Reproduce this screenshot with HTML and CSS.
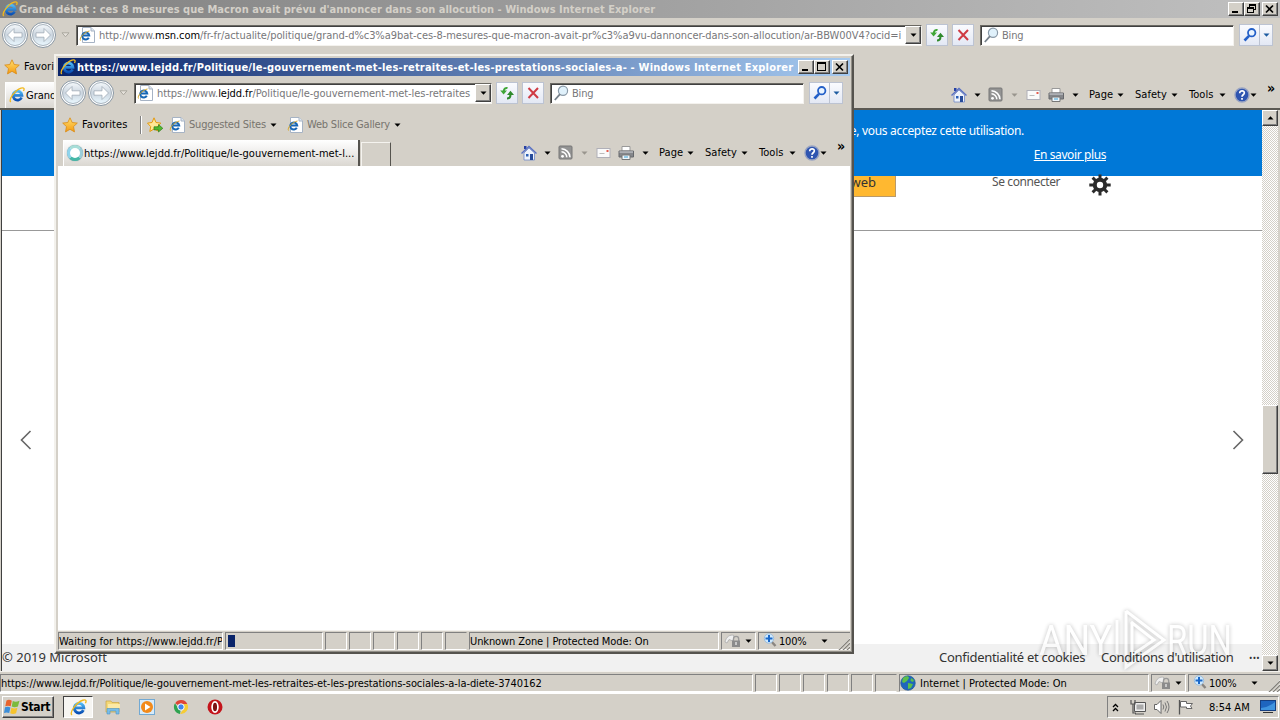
FILE: index.html
```html
<!DOCTYPE html>
<html lang="en">
<head>
  <meta charset="UTF-8">
  <title>Windows Internet Explorer</title>
  <link rel="stylesheet" href="styles.css">
</head>
<body>
  <!-- Shared icons -->
  <svg class="sprites" width="0" height="0">
    <defs>
      <linearGradient id="orb" x1="0" y1="0" x2="0" y2="1">
        <stop offset="0" stop-color="#f4f8fb"/>
        <stop offset=".5" stop-color="#cbd5df"/>
        <stop offset="1" stop-color="#eaf8ff"/>
      </linearGradient>
      <linearGradient id="gold" x1="0" y1="0" x2="0" y2="1">
        <stop offset="0" stop-color="#ffe070"/>
        <stop offset="1" stop-color="#f59a10"/>
      </linearGradient>
      <linearGradient id="blue" x1="0" y1="0" x2="0" y2="1">
        <stop offset="0" stop-color="#4fb9f5"/>
        <stop offset="1" stop-color="#0a50b5"/>
      </linearGradient>
    </defs>
    <symbol id="ie" viewBox="0 0 16 16">
      <path d="M12.6 10.5A4.5 4.5 0 1 1 13 8.3H5" fill="none" stroke="url(#blue)" stroke-width="2.7"/>
      <path d="M1.8 15C-.8 12.6 6 3.200 12 1.200C15 .2 15.800 1.500 14.500 4" fill="none" stroke="#f2b91d" stroke-width="1.300"/>
    </symbol>
    <symbol id="page-ie" viewBox="0 0 16 16">
      <path d="M3.500.5H12L15.500 4V15.500H3.500Z" fill="#fff" stroke="#a6b3c4"/>
      <path d="M12 .5V4H15.500" fill="#dde6f0" stroke="#a6b3c4"/>
      <path d="M9.800 10.800A3.500 3.500 0 1 1 10.200 8.500H4" fill="none" stroke="#1767b5" stroke-width="2"/>
      <path d="M1.500 13.500C0 11 5 5 10.500 4" fill="none" stroke="#d9a92a"/>
    </symbol>
    <symbol id="back" viewBox="0 0 28 28">
      <circle cx="14" cy="14" r="12.500" fill="#fff" stroke="#8795a2"/>
      <circle cx="14" cy="14" r="10.500" fill="url(#orb)" stroke="#a9b4be"/>
      <path d="M6.500 14L13 7.500V11.800H21V16.200H13V20.500Z" fill="#fff" stroke="#9fabb6" stroke-width=".8"/>
    </symbol>
    <symbol id="star" viewBox="0 0 16 16">
      <path d="M8 .8L10.200 5.500L15.300 6.100L11.500 9.600L12.500 14.900L8 12.300L3.500 14.900L4.500 9.600L.7 6.100L5.800 5.500Z" fill="url(#gold)" stroke="#d98a14" stroke-width=".8"/>
    </symbol>
    <symbol id="star-add" viewBox="0 0 16 16">
      <path d="M7 .8L9 5.500L13.800 6.100L10.500 9.600L11 13.900L7 12L2.800 14.500L3.700 9.600L.5 6.100L5 5.500Z" fill="#ffe795" stroke="#e39a12"/>
      <path d="M7 9.800H11.500V7.500L15.800 11.300L11.500 15V12.800H7Z" fill="#52b92f" stroke="#2b7d18" stroke-width=".7"/>
    </symbol>
    <symbol id="refresh" viewBox="0 0 16 16">
      <path d="M8.500 3C6.500 2.500 5 4 4.800 6" fill="none" stroke="#3fa637" stroke-width="2"/>
      <path d="M1.200 5.500H8L4.600 9.500Z" fill="#3fa637"/>
      <path d="M8 13.500C10.500 13.500 11.500 12 11.500 9.500" fill="none" stroke="#2f8a2c" stroke-width="2"/>
      <path d="M8 10H15L11.500 5.800Z" fill="#2f8a2c"/>
    </symbol>
    <symbol id="stop" viewBox="0 0 16 16">
      <path d="M3.500 3L13 13M13 3L3.500 13" stroke="#cf3b44" stroke-width="2"/>
    </symbol>
    <symbol id="glass" viewBox="0 0 16 16">
      <circle cx="10" cy="5.800" r="4.600" fill="#e0f1fb" stroke="#8a9aa8" stroke-width="1.200"/>
      <path d="M7 9.200L1.800 15" stroke="#76818b" stroke-width="1.800"/>
    </symbol>
    <symbol id="find" viewBox="0 0 16 16">
      <circle cx="9.700" cy="5.700" r="3.700" fill="#e9f4ff" stroke="#2460c8" stroke-width="1.800"/>
      <path d="M7 8.800L2.500 13.500" stroke="#2460c8" stroke-width="2.600"/>
    </symbol>
    <symbol id="home" viewBox="0 0 16 16">
      <path d="M3 1H5.500V4H3Z" fill="#2540a5"/>
      <path d="M3 8L8 3L13.500 8V15H3Z" fill="#eef3fc" stroke="#7088c8" stroke-width=".8"/>
      <path d="M.5 8.500L8 1.500L15.500 8.500" fill="none" stroke="#5870c4" stroke-width="1.400"/>
      <path d="M5 9H7.500V11.500H5Z" fill="#2b5fb5"/>
      <path d="M9 9H12V15H9Z" fill="#274b9a"/>
    </symbol>
    <symbol id="rss" viewBox="0 0 16 16">
      <rect x="1" y="1" width="13" height="13" rx="1" fill="#939393" stroke="#777"/>
      <circle cx="4.500" cy="11.300" r="1.400" fill="#fff"/>
      <path d="M3.500 6.800A5.500 5.500 0 0 1 8.800 12.300M3.500 3.700A9 9 0 0 1 12 12.300" fill="none" stroke="#fff" stroke-width="1.500"/>
    </symbol>
    <symbol id="mail" viewBox="0 0 16 16">
      <rect x="1" y="3.500" width="13" height="9" fill="#fafafa" stroke="#b0b0b8"/>
      <path d="M10.500 5H12.500V7H10.500Z" fill="#e55a4c"/>
      <path d="M3.500 8.500H8.500" stroke="#bbb"/>
    </symbol>
    <symbol id="printer" viewBox="0 0 16 16">
      <path d="M4 1.500H12V6H4Z" fill="#fff" stroke="#999"/>
      <path d="M1 6H15.500V12H1Z" fill="#85878b" stroke="#66686c"/>
      <path d="M1.500 7H15" stroke="#d5d7dc"/>
      <path d="M4 10H12V14.500H4Z" fill="#eef6fb" stroke="#777"/>
      <path d="M6 12H10" stroke="#3aa0d5"/>
    </symbol>
    <symbol id="help" viewBox="0 0 16 16">
      <circle cx="8" cy="8" r="7" fill="#2f55b0" stroke="#98a3c2" stroke-width="1.400"/>
      <path d="M5.700 6.200C5.700 3 10.500 3.300 10.300 6C10.200 7.800 8 7.800 8 9.800M8 11V12.800" fill="none" stroke="#fff" stroke-width="1.700"/>
    </symbol>
    <symbol id="lock" viewBox="0 0 18 16">
      <path d="M1 9C2 4 6 1 10 2.500L9 8L5 6.500L3 10Z" fill="#efefef" stroke="#aaa" stroke-width=".8"/>
      <path d="M9.500 8V6A2.600 2.600 0 0 1 14.700 6V8" fill="none" stroke="#999" stroke-width="1.300"/>
      <rect x="8" y="7.500" width="8" height="6.500" fill="#8b8b8b"/>
      <path d="M12 9V12" stroke="#ddd" stroke-width="1.500"/>
    </symbol>
    <symbol id="zoom" viewBox="0 0 16 16">
      <path d="M8 8L12.500 13" stroke="#8a8580" stroke-width="2.400"/>
      <circle cx="6" cy="5.500" r="4.700" fill="#cfeaff" stroke="#9cbddb"/>
      <path d="M6 2V9M2.500 5.500H9.500" stroke="#1b68c9" stroke-width="2"/>
    </symbol>
    <symbol id="down" viewBox="0 0 7 4"><path d="M.5 .5H6.500L3.500 3.800Z" fill="currentColor"/></symbol>
    <symbol id="hollow" viewBox="0 0 9 6"><path d="M1 .8H8L4.500 4.800Z" fill="#e5e2dc" stroke="#aaa79f"/></symbol>
    <symbol id="minimize" viewBox="0 0 12 10"><path d="M2 7H8V9H2Z"/></symbol>
    <symbol id="maximize" viewBox="0 0 12 10"><path d="M1 0H10V9H1ZM2 2V8H9V2Z" fill-rule="evenodd"/></symbol>
    <symbol id="restore" viewBox="0 0 12 10"><path d="M3 0H10V6H8V5H9V2H4V3H3ZM1 3H8V9H1ZM2 5V8H7V5Z" fill-rule="evenodd"/></symbol>
    <symbol id="close" viewBox="0 0 12 10"><path d="M2 1.500L9 8.500M9 1.500L2 8.500" stroke="#000" stroke-width="1.700"/></symbol>
    <symbol id="grip" viewBox="0 0 13 13">
      <path d="M1 13L13 1M5 13L13 5M9 13L13 9" stroke="#fff"/>
      <path d="M2 13L13 2M6 13L13 6M10 13L13 10" stroke="#85827b" stroke-width="1.300"/>
    </symbol>
  </svg>

  <!-- Main window -->
  <div class="window main-window">
    <div class="title-bar inactive">
      <svg class="icon"><use href="#ie"/></svg>
      <span class="title main-title">Grand débat : ces 8 mesures que Macron avait prévu d'annoncer dans son allocution - Windows Internet Explorer</span>
      <div class="controls">
        <i class="control"><svg><use href="#minimize"/></svg></i>
        <i class="control"><svg><use href="#restore"/></svg></i>
        <i class="control close"><svg><use href="#close"/></svg></i>
      </div>
    </div>
    <div class="nav-bar">
      <svg class="orb"><use href="#back"/></svg>
      <svg class="orb forward"><use href="#back"/></svg>
      <svg class="recent"><use href="#hollow"/></svg>
      <div class="address">
        <svg class="icon"><use href="#page-ie"/></svg>
        <span class="url main-url">http://www.<b>msn.com</b>/fr-fr/actualite/politique/grand-d%c3%a9bat-ces-8-mesures-que-macron-avait-pr%c3%a9vu-dannoncer-dans-son-allocution/ar-BBW00V4?ocid=i</span>
        <i class="combo"><svg class="arrow"><use href="#down"/></svg></i>
      </div>
      <i class="tool"><svg class="icon"><use href="#refresh"/></svg></i>
      <i class="tool"><svg class="icon"><use href="#stop"/></svg></i>
      <div class="search"><svg class="icon"><use href="#glass"/></svg><span>Bing</span></div>
      <div class="search-button"><svg class="icon"><use href="#find"/></svg><i><svg class="arrow"><use href="#down"/></svg></i></div>
    </div>
    <div class="favorites-bar">
      <svg class="icon"><use href="#star"/></svg>
      <span class="favorites">Favorites</span>
    </div>
    <div class="tab-row">
      <div class="tab main-tab"><svg class="icon"><use href="#ie"/></svg><span>Grand débat</span></div>
      <div class="command-bar">
        <svg class="icon"><use href="#home"/></svg><svg class="arrow"><use href="#down"/></svg>
        <svg class="icon"><use href="#rss"/></svg><svg class="arrow dim"><use href="#down"/></svg>
        <svg class="icon"><use href="#mail"/></svg>
        <svg class="icon"><use href="#printer"/></svg><svg class="arrow"><use href="#down"/></svg>
        <span>Page</span><svg class="arrow"><use href="#down"/></svg>
        <span>Safety</span><svg class="arrow"><use href="#down"/></svg>
        <span>Tools</span><svg class="arrow"><use href="#down"/></svg>
        <svg class="icon"><use href="#help"/></svg><svg class="arrow"><use href="#down"/></svg>
        <span class="more">»</span>
      </div>
    </div>
    <div class="viewport">
      <div class="site">
        <div class="cookie-banner">
          <p>En poursuivant votre navigation sur ce site, vous acceptez cette utilisation.</p>
          <a>En savoir plus</a>
        </div>
        <div class="site-header">
          <span class="web-button">web</span>
          <span class="sign-in">Se connecter</span>
          <svg class="gear" viewBox="0 0 22 22">
            <circle cx="11" cy="11" r="5.200" fill="none" stroke="#2b2b2b" stroke-width="4"/>
            <path d="M11 .5V5M11 17V21.500M.3 11H5M17 11H21.700M3.600 3.600L6.500 6.500M15.500 15.500L18.400 18.400M3.600 18.400L6.500 15.500M15.500 6.500L18.400 3.600" stroke="#2b2b2b" stroke-width="3"/>
          </svg>
        </div>
        <div class="carousel">
          <svg viewBox="0 0 12 20"><path d="M10.500 1L1.500 10L10.500 19" fill="none" stroke="#666" stroke-width="1.600"/></svg>
          <svg viewBox="0 0 12 20"><path d="M1.500 1L10.500 10L1.500 19" fill="none" stroke="#666" stroke-width="1.600"/></svg>
        </div>
        <div class="site-footer">
          <span class="copyright">© 2019 Microsoft</span>
          <span class="privacy">Confidentialité et cookies</span>
          <span class="terms">Conditions d'utilisation</span>
          <span class="dots">•••</span>
        </div>
      </div>
      <div class="scrollbar">
        <i class="scroll-button"><svg class="arrow up"><use href="#down"/></svg></i>
        <i class="thumb"></i>
        <i class="scroll-button bottom"><svg class="arrow"><use href="#down"/></svg></i>
      </div>
    </div>
    <div class="status-bar">
      <div class="panel message"><span class="main-message">https://www.lejdd.fr/Politique/le-gouvernement-met-les-retraites-et-les-prestations-sociales-a-la-diete-3740162</span></div>
      <i class="panel"></i><i class="panel"></i><i class="panel"></i><i class="panel"></i><i class="panel"></i><i class="panel last"></i>
      <div class="panel zone">
        <svg class="icon" viewBox="0 0 16 16">
          <circle cx="8" cy="8" r="7.300" fill="#1f66bd" stroke="#24568f" stroke-width=".6"/>
          <path d="M3 3C6 .5 9 1 9 3L7 6L4 8L2 7ZM8 8L13 9L11 13L8 14ZM11 3L14 5L13 7L10.500 6Z" fill="#5cc04a"/>
        </svg>
        <span class="main-zone">Internet | Protected Mode: On</span>
      </div>
      <div class="panel lock"><svg class="lock-icon"><use href="#lock"/></svg><svg class="arrow"><use href="#down"/></svg></div>
      <div class="panel zoom"><svg class="icon"><use href="#zoom"/></svg><span>100%</span><svg class="arrow"><use href="#down"/></svg><svg class="grip"><use href="#grip"/></svg></div>
    </div>
  </div>

  <!-- Popup window -->
  <div class="window popup">
    <div class="title-bar">
      <svg class="icon"><use href="#ie"/></svg>
      <span class="title popup-title">https://www.lejdd.fr/Politique/le-gouvernement-met-les-retraites-et-les-prestations-sociales-a- - Windows Internet Explorer</span>
      <div class="controls">
        <i class="control"><svg><use href="#minimize"/></svg></i>
        <i class="control"><svg><use href="#maximize"/></svg></i>
        <i class="control close"><svg><use href="#close"/></svg></i>
      </div>
    </div>
    <div class="nav-bar">
      <svg class="orb"><use href="#back"/></svg>
      <svg class="orb forward"><use href="#back"/></svg>
      <svg class="recent"><use href="#hollow"/></svg>
      <div class="address">
        <svg class="icon"><use href="#page-ie"/></svg>
        <span class="url popup-url">https://www.<b>lejdd.fr</b>/Politique/le-gouvernement-met-les-retraites</span>
        <i class="combo"><svg class="arrow"><use href="#down"/></svg></i>
      </div>
      <i class="tool"><svg class="icon"><use href="#refresh"/></svg></i>
      <i class="tool"><svg class="icon"><use href="#stop"/></svg></i>
      <div class="search"><svg class="icon"><use href="#glass"/></svg><span>Bing</span></div>
      <div class="search-button"><svg class="icon"><use href="#find"/></svg><i><svg class="arrow"><use href="#down"/></svg></i></div>
    </div>
    <div class="favorites-bar">
      <svg class="icon"><use href="#star"/></svg>
      <span class="favorites">Favorites</span>
      <i class="separator"></i>
      <svg class="icon"><use href="#star-add"/></svg>
      <div class="link suggested"><svg class="icon"><use href="#page-ie"/></svg><span>Suggested Sites</span><svg class="arrow"><use href="#down"/></svg></div>
      <div class="link gallery"><svg class="icon"><use href="#page-ie"/></svg><span>Web Slice Gallery</span><svg class="arrow"><use href="#down"/></svg></div>
    </div>
    <div class="tab-row">
      <div class="tab popup-tab"><i class="spinner"></i><span>https://www.lejdd.fr/Politique/le-gouvernement-met-l...</span></div>
      <i class="new-tab"></i>
      <div class="command-bar">
        <svg class="icon"><use href="#home"/></svg><svg class="arrow"><use href="#down"/></svg>
        <svg class="icon"><use href="#rss"/></svg><svg class="arrow dim"><use href="#down"/></svg>
        <svg class="icon"><use href="#mail"/></svg>
        <svg class="icon"><use href="#printer"/></svg><svg class="arrow"><use href="#down"/></svg>
        <span>Page</span><svg class="arrow"><use href="#down"/></svg>
        <span>Safety</span><svg class="arrow"><use href="#down"/></svg>
        <span>Tools</span><svg class="arrow"><use href="#down"/></svg>
        <svg class="icon"><use href="#help"/></svg><svg class="arrow"><use href="#down"/></svg>
        <span class="more">»</span>
      </div>
    </div>
    <div class="blank-page"></div>
    <div class="status-bar">
      <div class="panel message"><span class="popup-message">Waiting for https://www.lejdd.fr/Politique</span></div>
      <div class="panel progress"><i></i></div>
      <i class="panel"></i><i class="panel"></i><i class="panel"></i><i class="panel"></i><i class="panel"></i><i class="panel last"></i>
      <div class="panel zone"><span class="popup-zone">Unknown Zone | Protected Mode: On</span></div>
      <div class="panel lock"><svg class="lock-icon"><use href="#lock"/></svg><svg class="arrow"><use href="#down"/></svg></div>
      <div class="panel zoom"><svg class="icon"><use href="#zoom"/></svg><span>100%</span><svg class="arrow"><use href="#down"/></svg><svg class="grip"><use href="#grip"/></svg></div>
    </div>
  </div>

  <!-- Taskbar -->
  <div class="taskbar">
    <div class="start">
      <svg viewBox="0 0 16 16">
        <path d="M2.500 1.500C4.500 .5 6 .7 7.800 1.700L6.700 7.300C5 6.500 3.300 6.400 1.300 7.200Z" fill="#e8632c"/>
        <path d="M8.800 2C10.800 3 12.600 3 15.500 1.800L13.900 7.500C11.500 8.500 9.700 8.500 7.700 7.600Z" fill="#7cba3c"/>
        <path d="M1 8.300C3 7.500 4.700 7.600 6.400 8.400L5.200 14C3.500 13.200 1.800 13.200 0 14Z" fill="#3d8ed8"/>
        <path d="M7.400 8.700C9.500 9.600 11.200 9.600 13.400 8.700L12.100 14.200C10 15.200 8.200 15.200 6.200 14.300Z" fill="#f6c32c"/>
      </svg>
      <span>Start</span>
    </div>
    <div class="task-ie"><svg><use href="#ie"/></svg></div>
    <div class="pinned">
      <svg viewBox="0 0 16 16">
        <path d="M1 2H6L7 3.500H14V13H1Z" fill="#f3d878" stroke="#c9a544" stroke-width=".7"/>
        <path d="M3 5H15V9H3Z" fill="#fbe9a6"/>
        <path d="M2 15V9.500H14V15H11V12H5V15Z" fill="#78bde8" stroke="#4c94c8" stroke-width=".6"/>
      </svg>
      <svg viewBox="0 0 16 16">
        <rect x=".5" y=".5" width="15" height="15" fill="#d7ebfa" stroke="#72a9d3"/>
        <circle cx="8" cy="8" r="6" fill="#f28a1b"/>
        <path d="M6 4.500L11.500 8L6 11.500Z" fill="#fff"/>
      </svg>
      <svg viewBox="0 0 16 16">
        <path d="M8 8L2.200 4.200A7 7 0 0 1 14.300 5L8 5Z" fill="#df4536"/>
        <path d="M8 8L7 15A7 7 0 0 1 2 4.300L5.400 9.500Z" fill="#30a350"/>
        <path d="M8 8V5H14.300A7 7 0 0 1 7.200 15L10.600 9.500Z" fill="#f6cc35"/>
        <circle cx="8" cy="8" r="3.200" fill="#4086ee" stroke="#fff"/>
      </svg>
      <svg viewBox="0 0 16 16">
        <circle cx="8" cy="8" r="7.500" fill="#c4141b"/>
        <ellipse cx="8" cy="8" rx="2.900" ry="5.200" fill="#7d1114" stroke="#fff" stroke-width="1.700"/>
      </svg>
    </div>
    <div class="tray">
      <svg class="chevrons" viewBox="0 0 7 9"><path d="M1 4L3.500 1.500L6 4M1 8L3.500 5.500L6 8" fill="none" stroke="#000" stroke-width="1.300"/></svg>
      <svg viewBox="0 0 16 16"><path d="M4.500 3.500H15.500V12.500H4.500Z" fill="#eee" stroke="#555"/><path d="M6.500 5.500H13.500V10.500H6.500Z" fill="#aaa"/><path d="M5 15H14M1 1V5H5V1M3 5V14H6" fill="none" stroke="#555" stroke-width="1.200"/></svg>
      <svg viewBox="0 0 16 16"><path d="M.5 5.500H3L7 1.500V14.500L3 10.500H.5Z" fill="#fff" stroke="#666"/><path d="M9 5.500Q10.500 8 9 10.500M11 3.500Q14 8 11 12.500M13 2Q17 8 13 14" fill="none" stroke="#777"/></svg>
      <svg viewBox="0 0 16 16"><path d="M1.500 1V15.500" stroke="#555" stroke-width="1.300"/><path d="M2.500 2.500H8.500V4.500H14.500L12.500 7L14 9.500H8.500V8H2.500Z" fill="#fff" stroke="#666"/></svg>
      <span class="clock">8:54 AM</span>
      <svg class="desktop" viewBox="0 0 16 14"><rect x=".5" y=".5" width="15" height="10" fill="#1e65bf" stroke="#153e80"/><path d="M1 8Q9 7 15 2V10H1Z" fill="#3f94df"/><path d="M3 12.500H13" stroke="#333"/></svg>
    </div>
  </div>

  <!-- Watermark -->
  <svg class="watermark" viewBox="0 0 200 70">
    <text x="4" y="51" textLength="73" lengthAdjust="spacingAndGlyphs">ANY</text>
    <path d="M82 16V50M91 7V63L129 36L91 7M96 18L119 36L97 51V18" fill="none" stroke="#fff" stroke-width="3"/>
    <text x="132" y="51" textLength="65" lengthAdjust="spacingAndGlyphs">RUN</text>
  </svg>
</body>
</html>
```
FILE: styles.css
```css
* {
  margin: 0;
  padding: 0;
  box-sizing: border-box;
}

body {
  width: 1280px;
  height: 720px;
  overflow: hidden;
  background: #d4d0c8;
  font-family: "DejaVu Sans Condensed", "DejaVu Sans", sans-serif;
  font-stretch: condensed;
  font-size: 11px;
  line-height: 14px;
  letter-spacing: -0.2px;
  color: #000;
}

svg {
  display: block;
  flex: none;
}

i {
  display: block;
  flex: none;
}

span {
  white-space: nowrap;
}

.sprites {
  position: absolute;
}

.icon {
  width: 16px;
  height: 16px;
}

.arrow {
  width: 7px;
  height: 4px;
}

.arrow.dim {
  color: #99958e;
}

.arrow.up {
  transform: rotate(180deg);
}

/* Windows */
.window {
  display: flex;
  flex-direction: column;
  background: #d4d0c8;
}

.main-window {
  height: 692px;
}

.popup {
  position: absolute;
  z-index: 2;
  left: 54px;
  top: 54px;
  width: 800px;
  height: 600px;
  padding: 2px;
  border: 2px solid;
  border-color: #f3f1ec #55534e #55534e #f3f1ec;
  box-shadow: inset -1px -1px #918e87;
}

.title-bar {
  display: flex;
  align-items: center;
  flex: none;
  height: 18px;
  padding: 0 2px;
  background: linear-gradient(90deg, #0a246a, #a6caf0);
  color: #fff;
}

.title-bar.inactive {
  background: linear-gradient(90deg, #808080, #c0c0c0);
  color: #d4d0c8;
}

.title {
  margin-left: 1px;
  padding-top: 2px;
  font-weight: bold;
}

.main-title {
  letter-spacing: 0.02px;
}

.popup-title {
  letter-spacing: 0.205px;
}

.controls {
  display: flex;
  margin-left: auto;
}

.control {
  width: 16px;
  height: 14px;
  padding: 1px 1px;
  background: #d4d0c8;
  border: 1px solid;
  border-color: #fff #404040 #404040 #fff;
  box-shadow: inset -1px -1px #808080;
}

.control svg {
  width: 12px;
  height: 10px;
}

.control.close {
  margin-left: 2px;
}

/* Address row */
.nav-bar {
  display: flex;
  align-items: center;
  flex: none;
  height: 34px;
  padding: 0 7px 0 1px;
}

.orb {
  width: 28px;
  height: 28px;
}

.orb.forward {
  transform: scaleX(-1);
}

.recent {
  width: 9px;
  height: 6px;
  margin: 0 6px 0 4px;
}

.address,
.search {
  display: flex;
  align-items: center;
  height: 21px;
  background: #fff;
  border: 1px solid;
  border-color: #6b6963 #f4f2ee #f4f2ee #6b6963;
  box-shadow: inset 1px 1px #404040;
  color: #77777a;
}

.address {
  flex: 1;
  min-width: 0;
  padding-left: 2px;
}

.url {
  flex: 1;
  margin-left: 4px;
  padding-top: 2px;
  overflow: hidden;
  letter-spacing: -0.06px;
}

.url b {
  font-weight: normal;
  color: #000;
}

.combo {
  display: grid;
  place-items: center;
  width: 16px;
  height: 18px;
  background: #d4d0c8;
  border: 1px solid;
  border-color: #fff #404040 #404040 #fff;
  box-shadow: inset -1px -1px #808080;
  color: #000;
}

.tool {
  display: grid;
  place-items: center;
  width: 22px;
  height: 22px;
  margin-left: 4px;
  background: linear-gradient(#fafbfe, #e3e8f4);
  border: 1px solid #bcc3d2;
}

.search {
  width: 254px;
  margin-left: 6px;
  padding-left: 2px;
}

.search span {
  margin-left: 3px;
  padding-top: 2px;
}

.search-button {
  display: flex;
  align-items: center;
  width: 34px;
  height: 22px;
  margin-left: 5px;
  padding-left: 2px;
  background: linear-gradient(#fafbfe, #e3e8f4);
  border: 1px solid #bcc3d2;
  color: #1c5ba0;
}

.search-button i {
  display: grid;
  place-items: center;
  flex: 1;
  height: 20px;
  margin-left: 1px;
  border-left: 1px solid #bcc3d2;
}

/* Favorites row */
.favorites-bar {
  display: flex;
  align-items: center;
  flex: none;
  height: 30px;
  padding-left: 4px;
}

.favorites {
  width: 58px;
  margin-left: 4px;
  letter-spacing: 0.1px;
}

.separator {
  width: 2px;
  height: 18px;
  margin-right: 5px;
  border-left: 1px solid #808080;
  border-right: 1px solid #fff;
}

.link {
  display: flex;
  align-items: center;
  margin-left: 6px;
  color: #77746e;
}

.link span {
  margin-left: 4px;
}

.link .arrow {
  margin-left: 4px;
  color: #000;
}

.link.gallery {
  margin-left: 10px;
}

/* Tabs and command bar */
.tab-row {
  display: flex;
  flex: none;
  height: 26px;
}

.tab {
  display: flex;
  align-items: center;
  height: 26px;
  margin-left: 5px;
  padding-left: 3px;
  background: linear-gradient(#fff, #f1f0ee 40%, #dad7d1);
  border-left: 1px solid #fff;
  border-right: 2px solid #55534e;
}

.tab span {
  margin-left: 1px;
  padding-top: 2px;
  letter-spacing: 0.01px;
}

.main-tab {
  width: 300px;
}

.popup-tab {
  width: 297px;
}

.spinner {
  width: 16px;
  height: 16px;
  border: 3px solid #6cc7ba;
  border-color: #a7ded8 #9aceda #45b8a8 #8fd4ec;
  border-radius: 50%;
  box-shadow: 0 0 1px #6f8d90;
  background: #fff;
}

.new-tab {
  width: 30px;
  height: 24px;
  margin: 2px 0 0 1px;
  border: 1px solid #f5f3ef;
  border-right: 1px solid #55534e;
  border-bottom: none;
}

.command-bar {
  display: grid;
  grid-template-columns: 23px 14px 23px 15px 22px 24px 17px 28px 18px 36px 18px 30px 15px 16px 17px 13px;
  align-items: center;
  height: 25px;
  margin-left: auto;
  letter-spacing: 0.05px;
}

.more {
  align-self: start;
  font-size: 14px;
  font-weight: bold;
  line-height: 12px;
}

/* Page in the main window */
.viewport {
  display: flex;
  flex: 1;
  min-height: 0;
  padding: 0 2px 0 1px;
  border-top: 2px solid #5b5953;
}

.site {
  display: flex;
  flex-direction: column;
  flex: 1;
  background: #fff;
  border-left: 1px solid #404040;
  font-family: "Noto Sans", "Open Sans", sans-serif;
  font-stretch: normal;
  font-size: 12px;
  letter-spacing: -0.4px;
}

.cookie-banner {
  height: 66px;
  padding: 14px 156px 0 0;
  background: #0078d7;
  color: #fff;
  text-align: right;
}

.cookie-banner p {
  margin-right: 82px;
  margin-bottom: 10px;
  letter-spacing: -0.3px;
}

.cookie-banner a {
  text-decoration: underline;
}

.site-header {
  display: flex;
  height: 55px;
  border-bottom: 1px solid #999;
}

.web-button {
  width: 94px;
  height: 21px;
  margin-left: 800px;
  padding-right: 19px;
  background: #ffb830;
  border: 1px solid #b99a6a;
  border-top: none;
  color: #333;
  font-size: 13px;
  letter-spacing: 0;
  line-height: 12px;
  text-align: right;
}

.sign-in {
  width: 97px;
  margin-left: 96px;
  color: #555;
  line-height: 12px;
}

.gear {
  width: 22px;
  height: 22px;
  margin-top: -2px;
}

.carousel {
  display: flex;
  flex: 1;
  align-items: center;
  justify-content: space-between;
  padding: 4px 18px 0;
}

.carousel svg {
  width: 12px;
  height: 20px;
}

.site-footer {
  display: flex;
  height: 27px;
  background: #f1f1f1;
  color: #333;
  font-size: 13px;
  letter-spacing: -0.3px;
  line-height: 27px;
}

/* Footer links stay readable above the watermark */
.site-footer span {
  position: relative;
  z-index: 1;
}

.copyright {
  flex: 1;
  letter-spacing: 0;
}

.privacy {
  width: 162px;
}

.terms {
  width: 148px;
}

.dots {
  width: 13px;
  font-size: 9px;
  letter-spacing: 0.3px;
}

.scrollbar {
  display: flex;
  flex-direction: column;
  width: 16px;
  background: repeating-conic-gradient(#fff 0 25%, #d4d0c8 0 50%) 0 0 / 2px 2px;
}

.scroll-button,
.thumb {
  background: #d4d0c8;
  border: 1px solid;
  border-color: #fff #404040 #404040 #fff;
  box-shadow: inset -1px -1px #808080;
}

.scroll-button {
  display: grid;
  place-items: center;
  height: 16px;
}

.scroll-button.bottom {
  margin-top: auto;
}

.thumb {
  height: 69px;
  margin-top: 279px;
}

/* Status bar */
.status-bar {
  display: flex;
  flex: none;
  height: 21px;
  padding: 2px 0 1px;
  border-top: 1px solid #f2f0ec;
}

.panel {
  display: flex;
  align-items: center;
  width: 22px;
  height: 18px;
  margin-right: 2px;
  border: 1px solid;
  border-color: #808080 #fff #fff #808080;
}

.panel span {
  padding-top: 2px;
}

.panel.message {
  flex: 1;
  min-width: 0;
  overflow: hidden;
}

.main-message {
  letter-spacing: -0.07px;
}

.popup-message {
  letter-spacing: 0.03px;
}

.main-zone {
  letter-spacing: 0;
}

.popup-zone {
  letter-spacing: -0.1px;
}

.panel.progress {
  width: 98px;
  padding-left: 2px;
}

.progress i {
  width: 7px;
  height: 12px;
  background: #0a246a;
}

.panel.zone {
  width: 250px;
}

.zone .icon {
  margin: 0 4px 0 0;
}

.panel.lock {
  width: 35px;
  padding-left: 2px;
}

.lock-icon {
  width: 18px;
  height: 16px;
  margin-right: 3px;
}

.panel.zoom {
  width: 92px;
  margin-right: 0;
  padding-left: 4px;
  border-right: none;
}

.zoom span {
  width: 42px;
}

.zoom .grip {
  width: 13px;
  height: 13px;
  margin: 5px 0 0 auto;
}

.panel.last {
  border-right-color: transparent;
}

.blank-page {
  flex: 1;
  background: #fff;
}

.popup .status-bar {
  height: 20px;
  padding: 1px 0 0;
}

/* Taskbar */
.taskbar {
  display: flex;
  align-items: center;
  height: 28px;
  padding: 0 1px 0 2px;
  border-top: 2px solid #fff;
}

.start {
  display: flex;
  align-items: center;
  width: 52px;
  height: 22px;
  padding-left: 1px;
  border: 1px solid;
  border-color: #fff #404040 #404040 #fff;
  box-shadow: inset -1px -1px #808080;
  font-size: 12px;
  font-weight: bold;
  letter-spacing: -0.3px;
}

.start svg {
  width: 16px;
  height: 16px;
  margin-right: 1px;
}

.task-ie {
  display: grid;
  place-items: center;
  width: 30px;
  height: 22px;
  margin: 0 12px 0 9px;
  background: #f6f5f2;
  border: 1px solid;
  border-color: #404040 #fff #fff #404040;
}

.task-ie svg {
  width: 17px;
  height: 17px;
}

.pinned {
  display: flex;
  gap: 18px;
}

.pinned svg {
  width: 16px;
  height: 16px;
}

.tray {
  display: flex;
  align-items: center;
  width: 172px;
  height: 22px;
  margin-left: auto;
  padding-left: 4px;
  border: 1px solid;
  border-color: #808080 #fff #fff #808080;
}

.tray svg {
  width: 16px;
  height: 16px;
  margin-right: 8px;
}

.tray .chevrons {
  width: 7px;
  height: 9px;
  margin-right: 11px;
}

.clock {
  width: 51px;
  margin-left: 7px;
  padding-top: 2px;
  letter-spacing: 0;
}

.tray .desktop {
  height: 14px;
  margin-right: 0;
}

.watermark {
  position: absolute;
  left: 1035px;
  top: 604px;
  width: 200px;
  height: 70px;
  opacity: .7;
  filter: drop-shadow(0 0 2px rgba(0, 0, 0, .35));
}

.watermark text {
  fill: #fff;
  font: 42px Roboto, sans-serif;
  letter-spacing: 0;
}
```
